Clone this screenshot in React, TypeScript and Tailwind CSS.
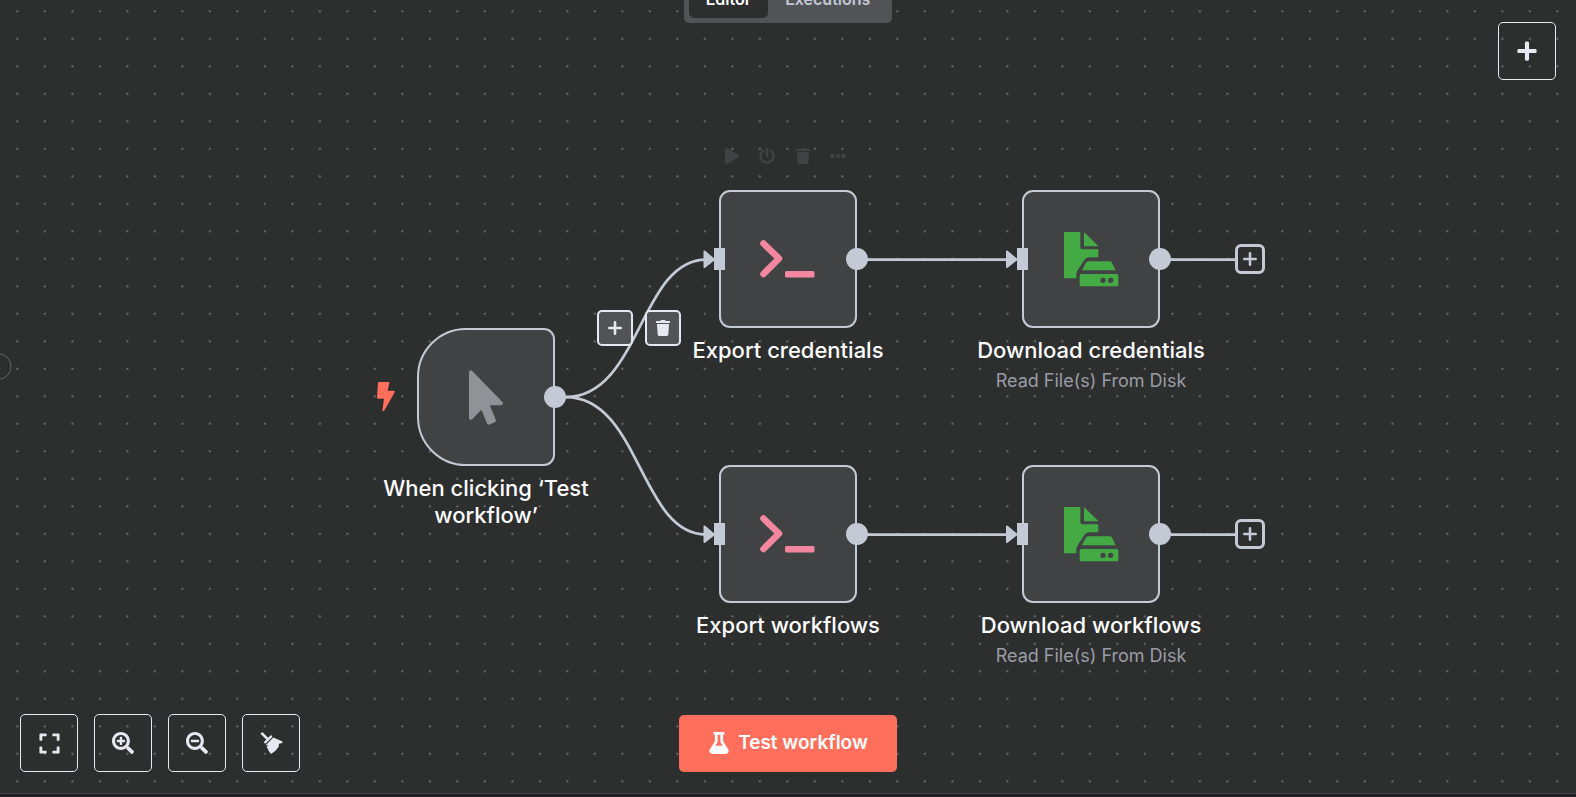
import type { ReactNode } from "react";
import {
  FaEllipsisH,
  FaExpand,
  FaFlask,
  FaMousePointer,
  FaPlay,
  FaPlus,
  FaPowerOff,
  FaSearchMinus,
  FaSearchPlus,
  FaTrash,
} from "react-icons/fa";

function TerminalIcon() {
  return (
    <svg viewBox="0 0 56 40" className="h-10 w-14" fill="none" stroke="#f2879f" strokeLinecap="round" strokeLinejoin="round">
      <path d="M3.500 4.500 19 19.500 3.500 35" strokeWidth="6.600" />
      <path d="M25 33.500Q25 32 26.500 32H53Q54.500 32 54.500 33.500V37Q54.500 38.500 53 38.500H26.500Q25 38.500 25 37Z" fill="#f2879f" stroke="none" />
    </svg>
  );
}

function DiskFileIcon() {
  return (
    <svg viewBox="2 0 165 165" className="h-[55px] w-[55px]" fill="#44aa44">
      <path d="M0 0H51V46Q51 52 57 52H105V76H78Q68 76 63 84L42 116Q39 121 39 127V139H0Z" />
      <path d="M62 0 105 42V43H62Z" />
      <path d="M75 88H139Q144 88 146 92L157 115H56L67 93Q70 88 75 88Z" />
      <path
        fillRule="evenodd"
        d="M54 126H160Q165 126 165 131V163H49V131Q49 126 54 126ZM119 137a8 8 0 1 0 0 16a8 8 0 1 0 0-16ZM142 137a8 8 0 1 0 0 16a8 8 0 1 0 0-16Z"
      />
    </svg>
  );
}

function BoltIcon() {
  return (
    <svg viewBox="0 0 54 87" className="h-[29px] w-[18px]" fill="#ff6f5c">
      <path d="M6 0H35Q38 0 37 3L32 26H51Q55 27 53 31L23 84Q20 88 16 86L21 50H3Q0 50 0 46L3 3Q3 0 6 0Z" />
    </svg>
  );
}

function BroomIcon() {
  return (
    <svg viewBox="0 0 69 67" className="h-[22px] w-[23px]" fill="currentColor">
      <path d="M6 5 22 21" stroke="currentColor" strokeWidth="8" strokeLinecap="round" />
      <path d="M13 34Q10 32 13 29L31 11Q34 9 36 12L37 15 17 35Z" />
      <path d="M19 38 40 17Q54 23 68 29Q69 32 66 34L59 35Q56 37 57 41L56 46Q47 60 33 67Q25 58 21 47L20 44 26 41 17 40Z" />
    </svg>
  );
}

function SmallPlus() {
  return (
    <svg viewBox="0 0 14 14" className="size-3.5" stroke="currentColor" strokeWidth="2.600" strokeLinecap="round">
      <path d="M7 1.300V12.700M1.300 7H12.700" />
    </svg>
  );
}

function ControlButton({ label, children }: { label: string; children: ReactNode }) {
  return (
    <button
      type="button"
      aria-label={label}
      className="flex size-[58px] items-center justify-center rounded-[5px] border border-[#e6e9f2] text-[#e6e9f2]"
    >
      {children}
    </button>
  );
}

function EdgeButton({ label, children }: { label: string; children: ReactNode }) {
  return (
    <button
      type="button"
      aria-label={label}
      className="flex size-9 items-center justify-center rounded-[5px] border-2 border-[#e6e9f2] bg-[#525356] text-[#e6e9f2]"
    >
      {children}
    </button>
  );
}

type NodeProps = {
  place: string;
  title: string;
  subtitle?: string;
  trigger?: boolean;
  icon: ReactNode;
};

function WorkflowNode({ place, title, subtitle, trigger, icon }: NodeProps) {
  return (
    <article className={`absolute flex w-[230px] flex-col items-center text-center ${place}`}>
      <div
        className={`relative flex size-[138px] items-center justify-center border-2 border-[#c3c9d5] bg-[#414244] ${
          trigger ? "rounded-l-[49px] rounded-r-[11px]" : "rounded-[11px]"
        }`}
      >
        {icon}
        {!trigger && <span className="absolute -left-[7px] top-14 h-[22px] w-[11px] bg-[#c3c9d5]" />}
        <span className="absolute -right-[13px] top-14 size-[22px] rounded-full bg-[#c3c9d5]" />
      </div>
      <h2 className={`mt-[9px] text-[22px] leading-[27px] font-medium text-white ${trigger ? "w-[212px]" : "whitespace-nowrap"}`}>
        {title}
      </h2>
      {subtitle && <p className="mt-[5px] text-[18px] leading-6 text-[#9a9ca6]">{subtitle}</p>}
    </article>
  );
}

function Connections() {
  return (
    <svg className="absolute inset-0 h-full w-full" fill="none" stroke="#c3c9d5" strokeWidth="2.750">
      <defs>
        <pattern id="dots" width="55" height="55" x="3.600" y="-2.500" patternUnits="userSpaceOnUse">
          <g fill="#a4a6a6" stroke="none">
            <circle cx="13.750" cy="13.750" r="0.850" />
            <circle cx="41.250" cy="13.750" r="0.850" />
            <circle cx="13.750" cy="41.250" r="0.850" />
            <circle cx="41.250" cy="41.250" r="0.850" />
          </g>
        </pattern>
      </defs>
      <rect width="100%" height="100%" fill="url(#dots)" stroke="none" />
      <circle cx="-2" cy="366.500" r="13" stroke="#626466" strokeWidth="1" />
      <path d="M555 397H566C640 397 640 259.500 706 259.500" />
      <path d="M555 397H566C640 397 640 534.500 706 534.500" />
      <path d="M857 259.500H1010M857 534.500H1010M1159 259.500H1235M1159 534.500H1235" />
      <g fill="#c3c9d5" strokeWidth="2" strokeLinejoin="round">
        <path d="M704.500 251.500V267L714 259.500Z" />
        <path d="M704.500 526.500V542L714 534.500Z" />
        <path d="M1007 251.500V267L1016.500 259.500Z" />
        <path d="M1007 526.500V542L1016.500 534.500Z" />
      </g>
    </svg>
  );
}

function AddNext({ place }: { place: string }) {
  return (
    <button
      type="button"
      aria-label="Add node"
      className={`absolute flex size-[30px] items-center justify-center rounded-md border-[3px] border-[#c3c9d5] bg-[#2d2e2e] text-[#c3c9d5] ${place}`}
    >
      <SmallPlus />
    </button>
  );
}

export default function App() {
  return (
    <div className="flex h-screen flex-col bg-[#201e20] font-['Inter',sans-serif]">
      <main className="relative flex flex-1 flex-col justify-between overflow-hidden border-b border-[#444548] bg-[#2d2e2e]">
        <section aria-label="Workflow canvas" className="absolute inset-0">
          <Connections />

          <div className="absolute left-[724px] top-[148px] flex w-[122px] justify-between text-[#414244]">
            <button type="button" aria-label="Run node"><FaPlay className="size-4" /></button>
            <button type="button" aria-label="Disable node"><FaPowerOff className="size-4" /></button>
            <button type="button" aria-label="Delete node"><FaTrash className="size-4" /></button>
            <button type="button" aria-label="More actions"><FaEllipsisH className="size-4" /></button>
          </div>

          <div className="absolute left-[377px] top-[382px]">
            <BoltIcon />
          </div>

          <WorkflowNode
            place="left-[371px] top-[328px]"
            title="When clicking ‘Test workflow’"
            trigger
            icon={<FaMousePointer className="h-[55px] w-[34px] text-[#909298]" />}
          />
          <WorkflowNode place="left-[673px] top-[190px]" title="Export credentials" icon={<TerminalIcon />} />
          <WorkflowNode
            place="left-[976px] top-[190px]"
            title="Download credentials"
            subtitle="Read File(s) From Disk"
            icon={<DiskFileIcon />}
          />
          <WorkflowNode place="left-[673px] top-[465px]" title="Export workflows" icon={<TerminalIcon />} />
          <WorkflowNode
            place="left-[976px] top-[465px]"
            title="Download workflows"
            subtitle="Read File(s) From Disk"
            icon={<DiskFileIcon />}
          />

          <div className="absolute left-[597px] top-[310px] flex gap-3">
            <EdgeButton label="Insert node"><SmallPlus /></EdgeButton>
            <EdgeButton label="Delete connection"><FaTrash className="size-4" /></EdgeButton>
          </div>

          <AddNext place="left-[1235px] top-[244px]" />
          <AddNext place="left-[1235px] top-[519px]" />
        </section>

        <header className="relative grid grid-cols-[1fr_auto_1fr] items-start">
          <nav aria-label="Workflow views" className="col-start-2 -mt-6 flex rounded-[5px] bg-[#525356] p-[5px] text-[16px] leading-[37px] font-semibold">
            <a href="#editor" className="rounded-[5px] bg-[#2d2e2e] px-[17px] text-white">Editor</a>
            <a href="#executions" className="px-[17px] text-[#c3c9d5]">Executions</a>
          </nav>
          <div className="mt-[22px] mr-5 flex justify-end">
            <ControlButton label="Add node"><FaPlus className="size-[22px]" /></ControlButton>
          </div>
        </header>

        <footer className="relative grid grid-cols-[1fr_auto_1fr] items-center px-5 pb-[21px]">
          <div className="flex gap-4">
            <ControlButton label="Fit view"><FaExpand className="size-[23px]" /></ControlButton>
            <ControlButton label="Zoom in"><FaSearchPlus className="size-[22px]" /></ControlButton>
            <ControlButton label="Zoom out"><FaSearchMinus className="size-[22px]" /></ControlButton>
            <ControlButton label="Tidy up"><BroomIcon /></ControlButton>
          </div>
          <button type="button" className="flex h-[57px] items-center gap-2 rounded-[5px] bg-[#ff6f5c] px-[29px] text-[19px] font-semibold text-white">
            <FaFlask className="size-[22px]" />
            Test workflow
          </button>
        </footer>
      </main>
      <div className="h-[3px]" />
    </div>
  );
}
